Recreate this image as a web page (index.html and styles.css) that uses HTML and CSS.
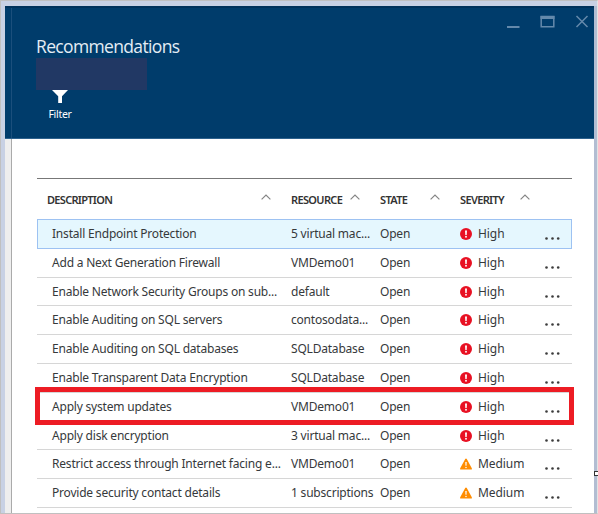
FILE: index.html
```html
<!DOCTYPE html>
<html lang="en">
<head>
<meta charset="utf-8">
<title>Recommendations</title>
<link rel="stylesheet" href="styles.css">
</head>
<body>
<svg class="defs" width="0" height="0">
  <symbol id="high" viewBox="0 0 12 12"><circle cx="6" cy="6" r="6" fill="#e81123"/><path d="M5 2.4h2L6.7 7H5.3z" fill="#fff"/><circle cx="6" cy="8.8" r=".95" fill="#fff"/></symbol>
  <symbol id="medium" viewBox="0 0 12 12"><path d="M6 .4Q6.5.4 6.8 1L11.8 10.3Q12.2 11.5 11.2 11.5H.8Q-.2 11.5.2 10.3L5.2 1Q5.5.4 6 .4z" fill="#ff8c00"/><path d="M5.3 4h1.4l-.2 3.8h-1z" fill="#fff"/><circle cx="6" cy="9.4" r=".75" fill="#fff"/></symbol>
  <symbol id="sort" viewBox="0 0 10 6"><path d="M.6 5.4 5 1l4.400 4.400" fill="none" stroke="#858585" stroke-width="1.200"/></symbol>
  <symbol id="dots" viewBox="0 0 15 3"><g fill="#3c3c3c"><circle cx="1.5" cy="1.5" r="1.3"/><circle cx="7.5" cy="1.5" r="1.3"/><circle cx="13.2" cy="1.5" r="1.3"/></g></symbol>
</svg>
<div class="window">
  <header class="header">
    <div class="controls">
      <svg width="82" height="14" viewBox="0 0 82 14" fill="none" stroke="#6489ab"><path d="M0 12h12.500" stroke-width="2"/><path d="M34.200 1.500h12.600v10.200H34.200z" stroke-width="1.500"/><path d="M33.500 2.500h14" stroke-width="3"/><path d="m69.500 1 11 11m0-11-11 11" stroke-width="1.500"/></svg>
    </div>
    <h1 class="title">Recommendations</h1>
    <div class="subtitle"></div>
    <div class="filter">
      <svg width="16" height="13" viewBox="0 0 16 13"><path d="M0 0h16L10 6.200V13H6.200V6.200z" fill="#fff"/></svg>
      <span>Filter</span>
    </div>
  </header>
  <main class="content">
    <div class="gutter"></div>
    <div class="table">
      <div class="row head">
        <div class="c h1">DESCRIPTION<svg class="sort"><use href="#sort"/></svg></div>
        <div class="c h2">RESOURCE<svg class="sort"><use href="#sort"/></svg></div>
        <div class="c h3">STATE<svg class="sort"><use href="#sort"/></svg></div>
        <div class="c h4">SEVERITY<svg class="sort"><use href="#sort"/></svg></div>
      </div>
      <div class="row selected"><div class="c desc">Install Endpoint Protection</div><div class="c">5 virtual mac...</div><div class="c">Open</div><div class="c level"><svg class="sev"><use href="#high"/></svg>High</div><svg class="dots"><use href="#dots"/></svg></div>
      <div class="row"><div class="c desc">Add a Next Generation Firewall</div><div class="c">VMDemo01</div><div class="c">Open</div><div class="c level"><svg class="sev"><use href="#high"/></svg>High</div><svg class="dots"><use href="#dots"/></svg></div>
      <div class="row"><div class="c desc">Enable Network Security Groups on sub...</div><div class="c">default</div><div class="c">Open</div><div class="c level"><svg class="sev"><use href="#high"/></svg>High</div><svg class="dots"><use href="#dots"/></svg></div>
      <div class="row"><div class="c desc">Enable Auditing on SQL servers</div><div class="c">contosodata...</div><div class="c">Open</div><div class="c level"><svg class="sev"><use href="#high"/></svg>High</div><svg class="dots"><use href="#dots"/></svg></div>
      <div class="row"><div class="c desc">Enable Auditing on SQL databases</div><div class="c">SQLDatabase</div><div class="c">Open</div><div class="c level"><svg class="sev"><use href="#high"/></svg>High</div><svg class="dots"><use href="#dots"/></svg></div>
      <div class="row"><div class="c desc">Enable Transparent Data Encryption</div><div class="c">SQLDatabase</div><div class="c">Open</div><div class="c level"><svg class="sev"><use href="#high"/></svg>High</div><svg class="dots"><use href="#dots"/></svg></div>
      <div class="row marked"><div class="c desc">Apply system updates</div><div class="c">VMDemo01</div><div class="c">Open</div><div class="c level"><svg class="sev"><use href="#high"/></svg>High</div><svg class="dots"><use href="#dots"/></svg></div>
      <div class="row"><div class="c desc">Apply disk encryption</div><div class="c">3 virtual mac...</div><div class="c">Open</div><div class="c level"><svg class="sev"><use href="#high"/></svg>High</div><svg class="dots"><use href="#dots"/></svg></div>
      <div class="row"><div class="c desc">Restrict access through Internet facing e...</div><div class="c">VMDemo01</div><div class="c">Open</div><div class="c level"><svg class="sev"><use href="#medium"/></svg>Medium</div><svg class="dots"><use href="#dots"/></svg></div>
      <div class="row"><div class="c desc">Provide security contact details</div><div class="c">1 subscriptions</div><div class="c">Open</div><div class="c level"><svg class="sev"><use href="#medium"/></svg>Medium</div><svg class="dots"><use href="#dots"/></svg></div>
    </div>
  </main>
  <div class="handle"></div>
</div>
</body>
</html>
```
FILE: styles.css
```css
* { box-sizing: border-box; }
body { margin: 0; overflow: hidden; font-family: "Noto Sans", "Open Sans", sans-serif; font-size: 12px; color: #36393b; }
.defs { position: absolute; }
.window { position: relative; width: 598px; height: 514px; padding: 5px 3px 0 4px; border: 1px solid #c0c0c0; border-right-color: #e3e3e3; background: linear-gradient(90deg, #c8d1e4 0 50%, #b2bdd2 50%); background-clip: padding-box; box-shadow: inset 0 5px #c8d1e4; }
.header { height: 133px; padding: 0 0 0 31px; background: linear-gradient(90deg, transparent 6px, #1b4f7c 6px 7px, transparent 7px), #003c6b; border-top: 2px solid #00325b; border-bottom: 1px solid #2d618d; }
.controls { height: 27px; display: flex; justify-content: flex-end; padding: 7px 5px 0 0; }
.controls svg { display: block; }
.title { margin: 0; height: 23px; font: 400 17.500px/22px "Open Sans", sans-serif; letter-spacing: -.65px; color: #e4edf5; }
.subtitle { width: 111px; height: 32px; background: #213864; }
.filter { width: 48px; display: flex; flex-direction: column; align-items: center; color: #fff; font-size: 10.500px; line-height: 14px; letter-spacing: -.3px; }
.filter span { margin-top: 4px; }
.content { height: 374px; display: flex; background: #fff; }
.gutter { width: 7px; margin-right: 25px; background: #eee; border-right: 1px solid #aaa; }
.table { width: 535px; padding-top: 39px; }
.row { display: grid; grid-template-columns: 254px 89px 80px 85px 27px; align-items: center; height: 28.800px; border-bottom: 1px solid #d6d6d6; position: relative; }
.c { display: flex; align-items: center; white-space: nowrap; line-height: 18px; font-weight: 450; letter-spacing: -.2px; }
.c.level { letter-spacing: -.08px; }
.desc { padding-left: 15px; }
.head { height: 42.100px; border-top: 1px solid #777; border-bottom: 0; font-size: 11px; color: #333; }
.head .c { font-weight: 600; letter-spacing: -.65px; }
.head .h1 { letter-spacing: -.7px; }
.h1 { padding-left: 10px; }
.sort { width: 10px; height: 6px; margin: -6px 20px 0 auto; }
.h4 .sort { margin-right: 15px; }
.selected { background: #e5f7fe; border-color: transparent; }
.selected::before { content: ""; position: absolute; inset: -1px 0 -1px; border: 1px solid #9dc2f2; }
.marked::after { content: ""; position: absolute; inset: -6px -2px -4.300px -2px; border: 5px solid #ed1c24; }
.sev { width: 12px; height: 12px; margin-right: 6px; }
.dots { width: 15px; height: 3px; margin-top: 9px; }
.handle { position: absolute; left: 593px; top: 470px; width: 5px; height: 5px; border: 1px solid #333; background: #fff; }
```
